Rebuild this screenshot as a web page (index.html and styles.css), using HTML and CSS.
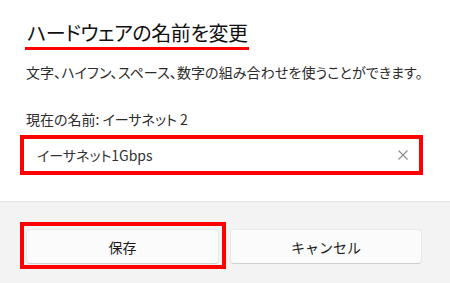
FILE: index.html
```html
<!DOCTYPE html>
<html lang="ja">
<head>
<meta charset="utf-8">
<link rel="stylesheet" href="styles.css">
</head>
<body>
<div class="dialog">
  <div class="content">
    <h1 class="title"><span class="title-text">ハードウェアの名前を変更</span></h1>
    <p class="desc">文字、ハイフン、スペース、数字の組み合わせを使うことができます。</p>
    <p class="label">現在の名前: イーサネット 2</p>
    <div class="field-mark">
      <div class="field">
        <span class="field-text">イーサネット1Gbps</span>
        <svg class="clear" width="10" height="10" viewBox="0 0 10 10"><path d="M0.5 0.5 L9.5 9.5 M9.5 0.5 L0.5 9.5" stroke="#8a8a8a" stroke-width="1.1" fill="none"/></svg>
      </div>
    </div>
  </div>
  <div class="footer">
    <div class="btn-mark"><button class="btn">保存</button></div>
    <button class="btn btn-cancel">キャンセル</button>
  </div>
</div>
</body>
</html>
```

FILE: styles.css
```css
* { box-sizing: border-box; }
html, body { margin: 0; padding: 0; background: #fff; }
body {
  font-family: "Noto Sans CJK JP", "Noto Sans", sans-serif;
  font-feature-settings: "palt";
  color: #1b1b1b;
  width: 450px;
  height: 283px;
  overflow: hidden;
}
.dialog { display: flex; flex-direction: column; height: 283px; }
.content {
  height: 201px;
  padding: 19px 27px 0 20px;
  display: flex;
  flex-direction: column;
}
.title {
  margin: 0 0 0 6px;
  font-size: 20px;
  font-weight: 400;
  letter-spacing: -0.4px;
  line-height: 28px;
  color: #111;
}
.title-text {
  display: inline-block;
  border-bottom: 3px solid #ff0000;
  padding: 0 1px 0 2px;
  margin-left: -1px;
}
.desc {
  margin: 12px 0 0 6px;
  font-size: 14px;
  line-height: 20px;
  color: #2b2b2b;
  letter-spacing: 0.1px;
}
.label {
  margin: 27px 0 0 6px;
  font-size: 14px;
  line-height: 20px;
  color: #2b2b2b;
}
.field-mark {
  margin-top: 6px;
  border: 4px solid #ff0000;
  width: 403px;
  height: 40px;
}
.field {
  height: 32px;
  background: #fff;
  display: flex;
  align-items: center;
  padding: 0 11px 0 13px;
}
.field-text {
  flex: 1;
  font-size: 14px;
  color: #333;
}
.clear { display: block; }
.footer {
  flex: 1;
  background: #f3f3f3;
  border-top: 1px solid #e6e6e6;
  padding: 20px 28px 0 20px;
  display: grid;
  grid-template-columns: 206px 1fr;
  column-gap: 4px;
  align-items: start;
}
.btn-mark {
  border: 4px solid #ff0000;
  height: 47px;
  padding: 3px 3px 0 2px;
}
.btn {
  display: block;
  width: 100%;
  height: 35px;
  margin: 0;
  background: #fbfbfb;
  border: 1px solid #e8e8e8;
  border-bottom-color: #cfcfcf;
  border-radius: 4px;
  font-family: inherit;
  font-size: 14px;
  color: #1b1b1b;
  padding: 0;
}
.btn-cancel { margin-top: 7px; }
```
